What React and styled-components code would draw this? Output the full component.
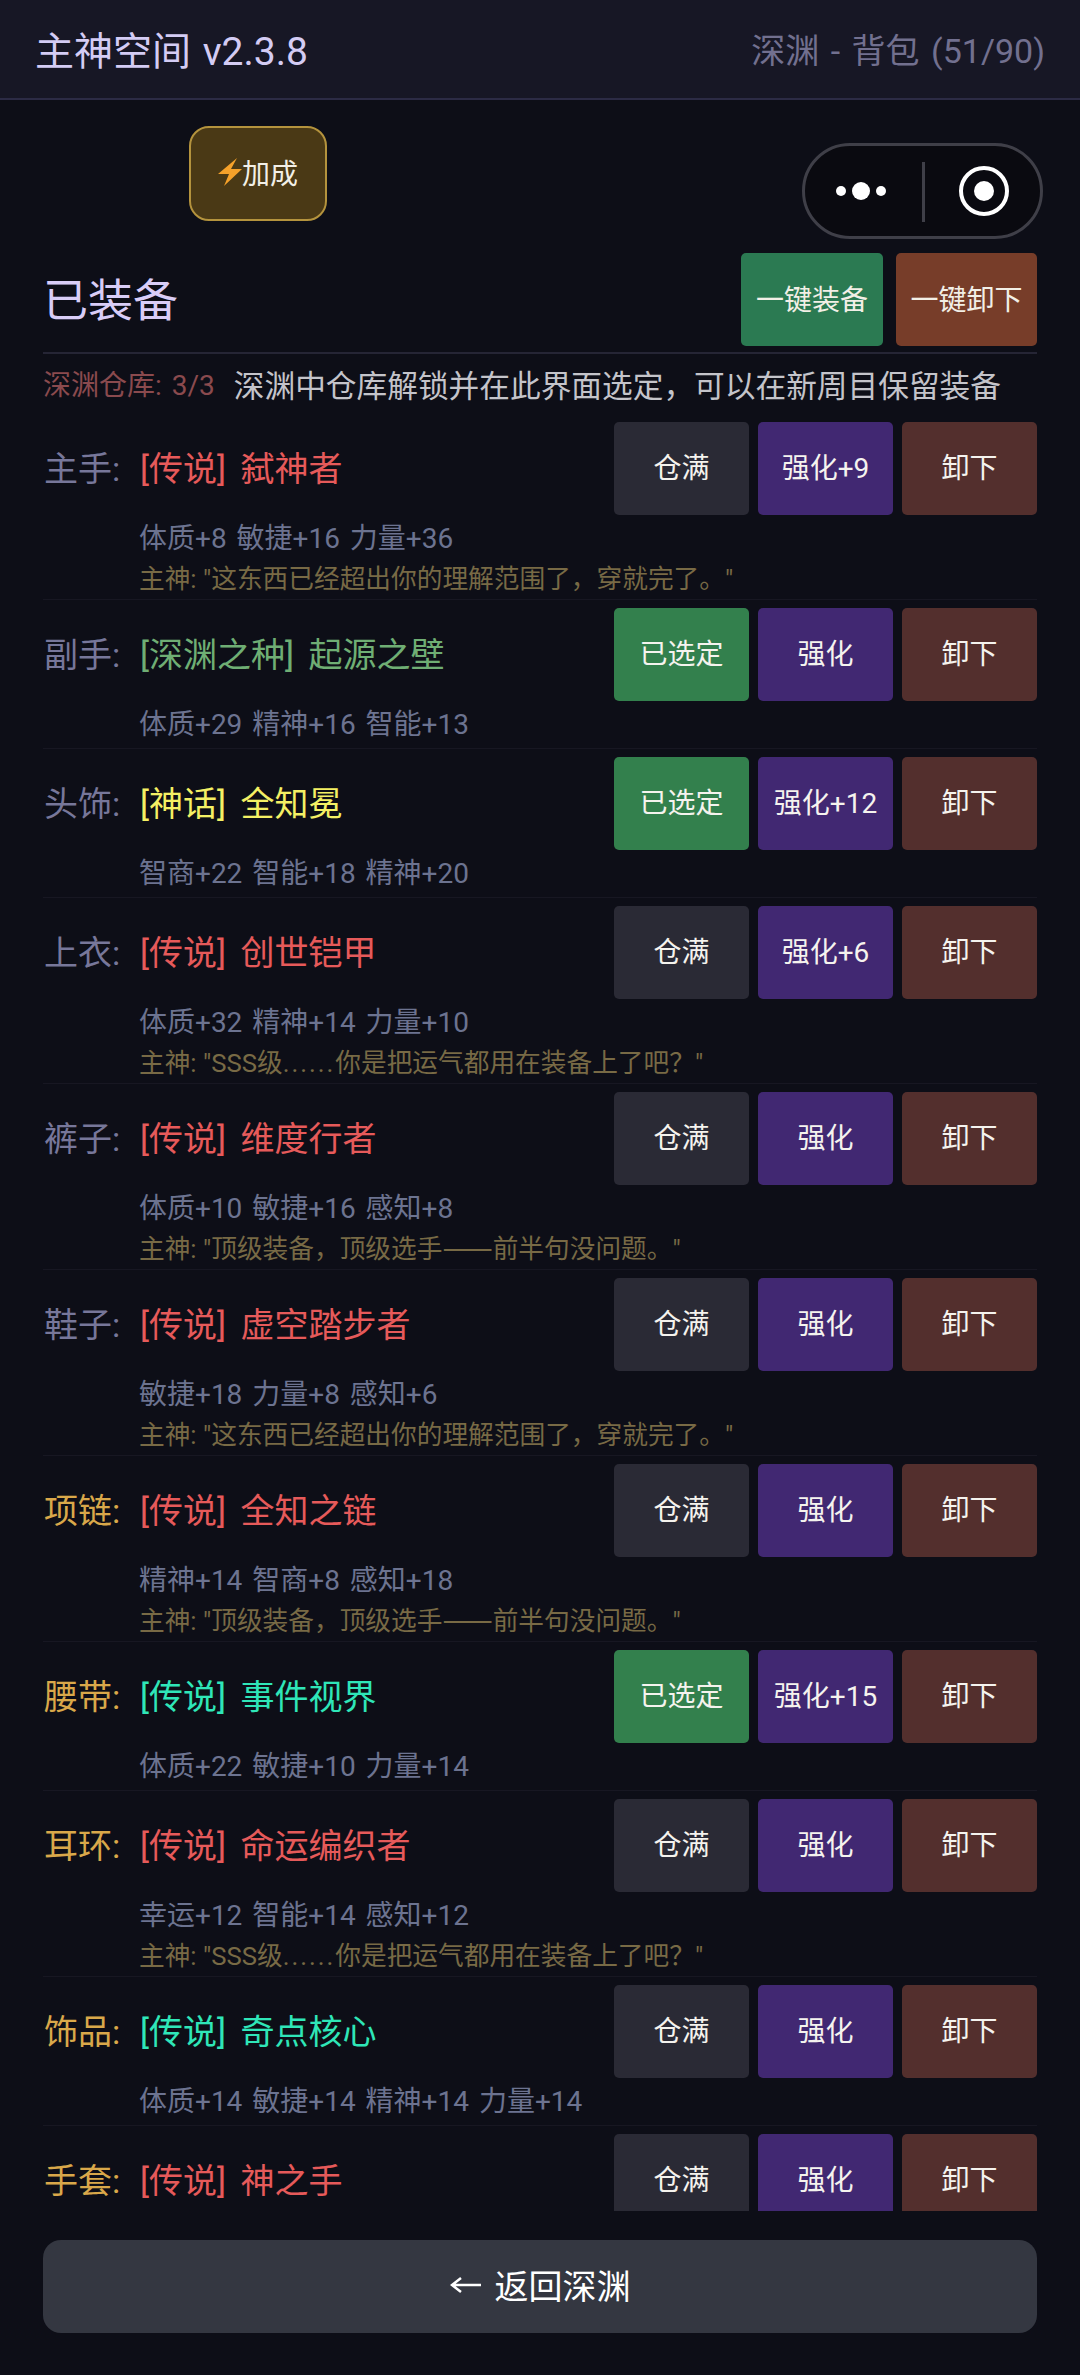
import React from 'react';
import styled, { createGlobalStyle } from 'styled-components';

const GlobalStyle = createGlobalStyle`
  html, body {
    margin: 0;
    padding: 0;
    background: #0d0e17;
  }
  * {
    box-sizing: border-box;
  }
`;

const Page = styled.div`
  position: relative;
  display: flex;
  flex-direction: column;
  width: 1080px;
  height: 2375px;
  overflow: hidden;
  background: #0d0e17;
  font-family: Roboto, "Noto Sans CJK SC", sans-serif;
  color: #fff;
`;

const Header = styled.header`
  display: flex;
  flex: none;
  align-items: center;
  justify-content: space-between;
  height: 100px;
  padding: 0 35px 2px 35px;
  background: #171725;
  border-bottom: 2px solid #2c2b45;
`;

const AppTitle = styled.h1`
  margin: 0;
  font-size: 39px;
  font-weight: 400;
  word-spacing: 2px;
  color: #d4ccf4;
`;

const Location = styled.div`
  font-size: 34px;
  word-spacing: 3px;
  color: #72708f;
`;

const Capsule = styled.div`
  position: absolute;
  top: 143px;
  left: 802px;
  width: 241px;
  height: 96px;
  background: #0a0a10;
  border: 3px solid #3f3f48;
  border-radius: 48px;
`;

const Toolbar = styled.div`
  flex: none;
  padding: 26px 0 0 189px;
`;

const BonusButton = styled.button`
  display: flex;
  align-items: center;
  justify-content: center;
  width: 138px;
  height: 95px;
  padding: 0 0 4px;
  background: #4a3915;
  border: 2px solid #b4933d;
  border-radius: 20px;
  font: inherit;
  font-size: 28px;
  color: #f2efe6;
`;

const SectionHead = styled.div`
  display: flex;
  flex: none;
  align-items: center;
  justify-content: space-between;
  margin: 32px 43px 0;
  padding-bottom: 6px;
  border-bottom: 2px solid #252535;
`;

const SectionTitle = styled.h2`
  margin: 0 0 4px;
  font-size: 45px;
  font-weight: 400;
  color: #d9cdf7;
`;

const BulkActions = styled.div`
  display: flex;
  gap: 13px;
`;

const BulkButton = styled.button`
  width: ${(p) => p.$width}px;
  height: 93px;
  padding: 0 0 3px;
  background: ${(p) => p.$bg};
  border: 0;
  border-radius: 5px;
  font: inherit;
  font-size: 28px;
  white-space: nowrap;
  color: #f2efe6;
`;

const Note = styled.div`
  display: flex;
  flex: none;
  align-items: center;
  gap: 19px;
  height: 60px;
  padding: 0 43px 2px;
`;

const NoteLabel = styled.span`
  font-size: 28px;
  word-spacing: 3px;
  color: #8a4a4e;
`;

const NoteText = styled.span`
  font-size: 30.7px;
  color: #c4c4ca;
`;

const List = styled.div`
  flex: 1;
  min-height: 0;
  margin: 0 43px;
  overflow: hidden;
`;

const Row = styled.div`
  padding: 8px 0 3px;
  border-bottom: 1px solid #171722;
`;

const RowMain = styled.div`
  display: flex;
  align-items: center;
  height: 93px;
`;

const Slot = styled.span`
  flex: none;
  width: 97px;
  padding: 0 0 5px 1px;
  font-size: 34px;
  color: ${(p) => (p.$gold ? '#d9a84a' : '#77779a')};
`;

const ItemName = styled.span`
  flex: 1;
  padding-bottom: 5px;
  font-size: 34px;
  word-spacing: 6px;
  color: ${(p) => p.$color};
`;

const RowActions = styled.div`
  display: flex;
  flex: none;
  gap: 9px;
`;

const ActionButton = styled.button`
  width: 135px;
  height: 93px;
  padding: 0 0 5px;
  background: ${(p) => p.$bg};
  border: 0;
  border-radius: 5px;
  font: inherit;
  font-size: 28px;
  color: #f5f3ee;
`;

const Stats = styled.div`
  margin-top: 4px;
  padding-left: 96px;
  font-size: 28px;
  line-height: 40px;
  word-spacing: 3px;
  color: #6c7390;
`;

const Quote = styled.div`
  margin-top: 3px;
  padding-left: 96px;
  font-size: 25.7px;
  line-height: 34px;
  color: #786a45;
`;

const Dots = styled.span`
  letter-spacing: 2px;
`;

const Dash = styled.span`
  font-family: "Noto Sans CJK SC", sans-serif;
  font-size: 30px;
  line-height: 0;
`;

const Footer = styled.div`
  flex: none;
  height: 164px;
  padding: 29px 43px 0;
`;

const BackButton = styled.button`
  display: flex;
  align-items: center;
  justify-content: center;
  gap: 14px;
  width: 100%;
  height: 93px;
  padding: 0 0 4px;
  background: #343741;
  border: 0;
  border-radius: 18px;
  font: inherit;
  font-size: 34px;
  color: #fff;
`;

const LEGEND = '#e65a5a';
const ABYSS = '#6fae74';
const MYTH = '#f4f064';
const TEAL = '#2fe6b8';

const QUOTE_A = '主神: "这东西已经超出你的理解范围了，穿就完了。"';
const QUOTE_B = '主神: "SSS级......你是把运气都用在装备上了吧？"';
const QUOTE_C = '主神: "顶级装备，顶级选手——前半句没问题。"';

const items = [
  { slot: '主手', name: '[传说] 弑神者', color: LEGEND, plus: 9, stats: '体质+8 敏捷+16 力量+36', quote: QUOTE_A },
  { slot: '副手', name: '[深渊之种] 起源之壁', color: ABYSS, selected: true, stats: '体质+29 精神+16 智能+13' },
  { slot: '头饰', name: '[神话] 全知冕', color: MYTH, selected: true, plus: 12, stats: '智商+22 智能+18 精神+20' },
  { slot: '上衣', name: '[传说] 创世铠甲', color: LEGEND, plus: 6, stats: '体质+32 精神+14 力量+10', quote: QUOTE_B },
  { slot: '裤子', name: '[传说] 维度行者', color: LEGEND, stats: '体质+10 敏捷+16 感知+8', quote: QUOTE_C },
  { slot: '鞋子', name: '[传说] 虚空踏步者', color: LEGEND, stats: '敏捷+18 力量+8 感知+6', quote: QUOTE_A },
  { slot: '项链', gold: true, name: '[传说] 全知之链', color: LEGEND, stats: '精神+14 智商+8 感知+18', quote: QUOTE_C },
  { slot: '腰带', gold: true, name: '[传说] 事件视界', color: TEAL, selected: true, plus: 15, stats: '体质+22 敏捷+10 力量+14' },
  { slot: '耳环', gold: true, name: '[传说] 命运编织者', color: LEGEND, stats: '幸运+12 智能+14 感知+12', quote: QUOTE_B },
  { slot: '饰品', gold: true, name: '[传说] 奇点核心', color: TEAL, stats: '体质+14 敏捷+14 精神+14 力量+14' },
  { slot: '手套', gold: true, name: '[传说] 神之手', color: LEGEND, stats: '' },
];

const CapsuleIcons = () => (
  <svg width="235" height="90" viewBox="0 0 235 90">
    <circle cx="36" cy="45" r="5" fill="#fff" />
    <circle cx="56" cy="45" r="9" fill="#fff" />
    <circle cx="76" cy="45" r="5" fill="#fff" />
    <rect x="117" y="16" width="3" height="60" fill="#3f3f48" />
    <circle cx="179" cy="45" r="23" fill="none" stroke="#fff" strokeWidth="4" />
    <circle cx="179" cy="45" r="10" fill="#fff" />
  </svg>
);

const Bolt = () => (
  <svg width="24" height="28" viewBox="0 0 24 28">
    <path d="M19 0 L0 16 H11 L6 28 L24 11 H13 Z" fill="#f5a12a" />
  </svg>
);

const BackArrow = () => (
  <svg width="31" height="18" viewBox="0 0 31 18">
    <path d="M31 9 H2 M11 2 L2 9 L11 16" fill="none" stroke="#fff" strokeWidth="2.5" />
  </svg>
);

// Roboto draws these two runs too short, so they get their own spans
const renderQuote = (quote) =>
  quote.split(/(\.{6}|——)/).map((part, i) => {
    if (part === '......') return <Dots key={i}>{part}</Dots>;
    if (part === '——') return <Dash key={i}>{part}</Dash>;
    return part;
  });

const App = () => (
  <Page>
    <GlobalStyle />
    <Header>
      <AppTitle>主神空间 v2.3.8</AppTitle>
      <Location>深渊 - 背包 (51/90)</Location>
    </Header>
    <Capsule>
      <CapsuleIcons />
    </Capsule>
    <Toolbar>
      <BonusButton>
        <Bolt />
        加成
      </BonusButton>
    </Toolbar>
    <SectionHead>
      <SectionTitle>已装备</SectionTitle>
      <BulkActions>
        <BulkButton $bg="#2b7a52" $width={142}>一键装备</BulkButton>
        <BulkButton $bg="#773d29" $width={141}>一键卸下</BulkButton>
      </BulkActions>
    </SectionHead>
    <Note>
      <NoteLabel>深渊仓库: 3/3</NoteLabel>
      <NoteText>深渊中仓库解锁并在此界面选定，可以在新周目保留装备</NoteText>
    </Note>
    <List>
      {items.map((item) => (
        <Row key={item.slot}>
          <RowMain>
            <Slot $gold={item.gold}>{item.slot}:</Slot>
            <ItemName $color={item.color}>{item.name}</ItemName>
            <RowActions>
              <ActionButton $bg={item.selected ? '#33804d' : '#2a2a35'}>
                {item.selected ? '已选定' : '仓满'}
              </ActionButton>
              <ActionButton $bg="#412872">
                {item.plus ? `强化+${item.plus}` : '强化'}
              </ActionButton>
              <ActionButton $bg="#532f2d">卸下</ActionButton>
            </RowActions>
          </RowMain>
          <Stats>{item.stats}</Stats>
          {item.quote && <Quote>{renderQuote(item.quote)}</Quote>}
        </Row>
      ))}
    </List>
    <Footer>
      <BackButton>
        <BackArrow />
        返回深渊
      </BackButton>
    </Footer>
  </Page>
);

export default App;
